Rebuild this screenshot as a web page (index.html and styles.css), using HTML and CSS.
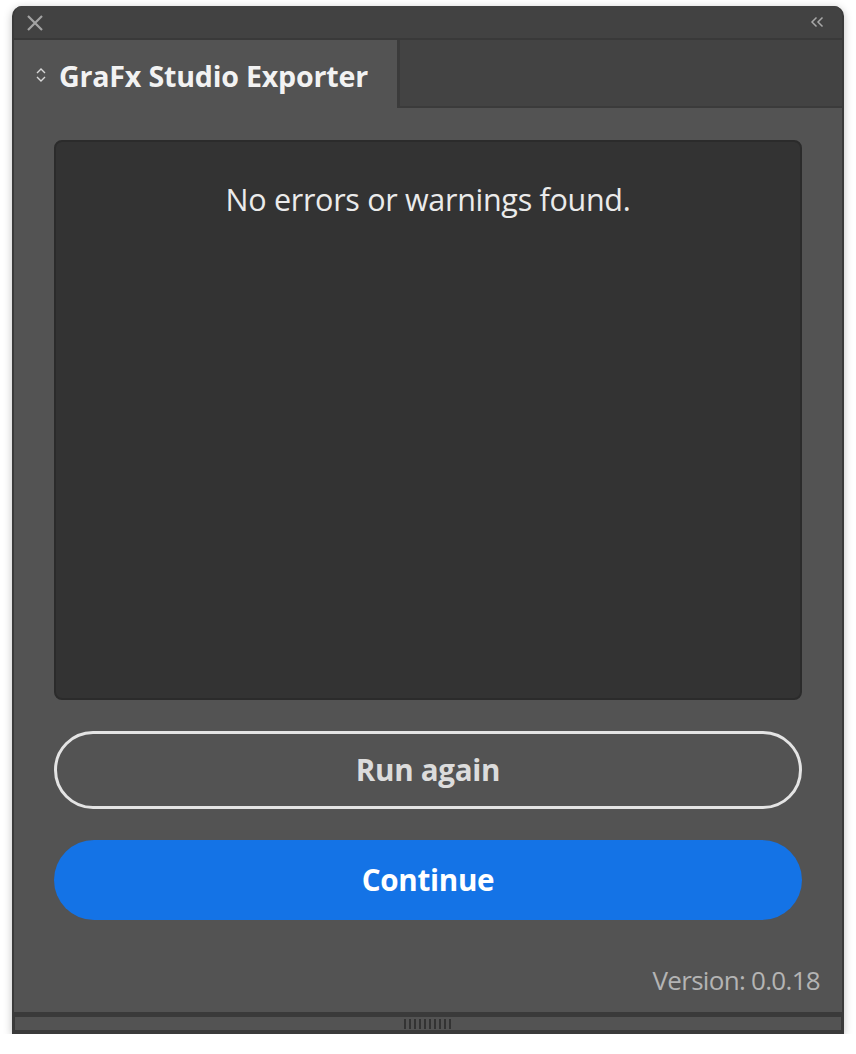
FILE: index.html
```html
<!DOCTYPE html>
<html>
<head>
<meta charset="utf-8">
<link rel="stylesheet" href="styles.css">
</head>
<body>
<div class="window">
  <div class="titlebar">
    <svg class="close" width="18" height="18" viewBox="0 0 18 18"><path d="M2 2 L16 16 M16 2 L2 16" stroke="#a3a3a3" stroke-width="2.2" fill="none"/></svg>
    <svg class="collapse" width="14" height="12" viewBox="0 0 14 12"><path d="M6.5 1.5 L2 6 L6.5 10.5 M12.5 1.5 L8 6 L12.5 10.5" stroke="#a8a8a8" stroke-width="1.5" fill="none"/></svg>
  </div>
  <div class="tabrow">
    <div class="tab">
      <svg class="updown" width="12" height="18" viewBox="0 0 12 18"><path d="M2 7 L6 3 L10 7 M2 11 L6 15 L10 11" stroke="#d8d8d8" stroke-width="1.4" fill="none"/></svg>
      <span class="tab-title">GraFx Studio Exporter</span>
    </div>
    <div class="tab-rest"></div>
  </div>
  <div class="panel">
    <div class="results">No errors or warnings found.</div>
    <button class="btn btn-outline">Run again</button>
    <button class="btn btn-primary">Continue</button>
    <div class="version">Version: 0.0.18</div>
  </div>
  <div class="bottombar">
    <div class="grip"></div>
  </div>
</div>
</body>
</html>
```
FILE: styles.css
```css
html, body {
  margin: 0;
  padding: 0;
  background: #ffffff;
}
body {
  font-family: "Open Sans", "Noto Sans", sans-serif;
}
.window {
  margin: 6px 0 0 12px;
  width: 832px;
  height: 1028px;
  display: flex;
  flex-direction: column;
  background: #3a3a3a;
  border-radius: 10px 10px 0 0;
  box-shadow: 0 2px 8px rgba(0,0,0,0.25);
  overflow: hidden;
  box-sizing: border-box;
  border-left: 2px solid #3a3a3a;
  border-right: 2px solid #3a3a3a;
}
.titlebar {
  height: 32px;
  background: #424242;
  border-bottom: 2px solid #393939;
  display: flex;
  align-items: center;
  justify-content: space-between;
  padding: 0 18px 0 12px;
  flex: none;
}
.close { margin-top: 2px; }
.tabrow {
  height: 68px;
  display: flex;
  flex: none;
}
.tab {
  width: 383px;
  background: #535353;
  display: flex;
  align-items: center;
  gap: 12px;
  padding-left: 21px;
  padding-top: 2px;
  box-sizing: border-box;
}
.tab-title {
  color: #f2f2f2;
  font-weight: 700;
  font-size: 28.6px;
  letter-spacing: -0.2px;
}
.tab-rest {
  flex: 1;
  background: #434343;
  border-left: 3px solid #3b3b3b;
  border-bottom: 2px solid #3b3b3b;
}
.panel {
  flex: 1;
  background: #535353;
  padding: 32px 40px 0 40px;
  display: flex;
  flex-direction: column;
}
.results {
  height: 560px;
  box-sizing: border-box;
  background: #333333;
  border: 2px solid #2b2b2b;
  border-radius: 8px;
  color: #ebebeb;
  font-size: 30.5px;
  text-align: center;
  padding-top: 36px;
  letter-spacing: -0.3px;
}
.btn {
  display: block;
  width: 100%;
  border-radius: 40px;
  font-family: "Open Sans", "Noto Sans", sans-serif;
  font-weight: 700;
  font-size: 29.6px;
  box-sizing: border-box;
  cursor: pointer;
  letter-spacing: -0.3px;
}
.btn-outline {
  margin-top: 31px;
  height: 78px;
  background: transparent;
  border: 3px solid #e4e4e4;
  color: #dcdcdc;
  padding-bottom: 2px;
}
.btn-primary {
  margin-top: 31px;
  height: 80px;
  background: #1473e6;
  border: none;
  color: #ffffff;
  padding-bottom: 2px;
}
.version {
  margin-top: 42px;
  text-align: right;
  margin-right: -18px;
  color: #b4b4b4;
  font-size: 26px;
  letter-spacing: -0.7px;
}
.bottombar {
  height: 22px;
  flex: none;
  background: #3a3a3a;
  padding: 5px 1px 4px 1px;
  box-sizing: border-box;
  display: flex;
  justify-content: center;
}
.bottombar .grip {
  flex: 1;
  background:
    repeating-linear-gradient(90deg, #333 0 2px, transparent 2px 5px) center / 48px 10px no-repeat,
    #535353;
}
```
